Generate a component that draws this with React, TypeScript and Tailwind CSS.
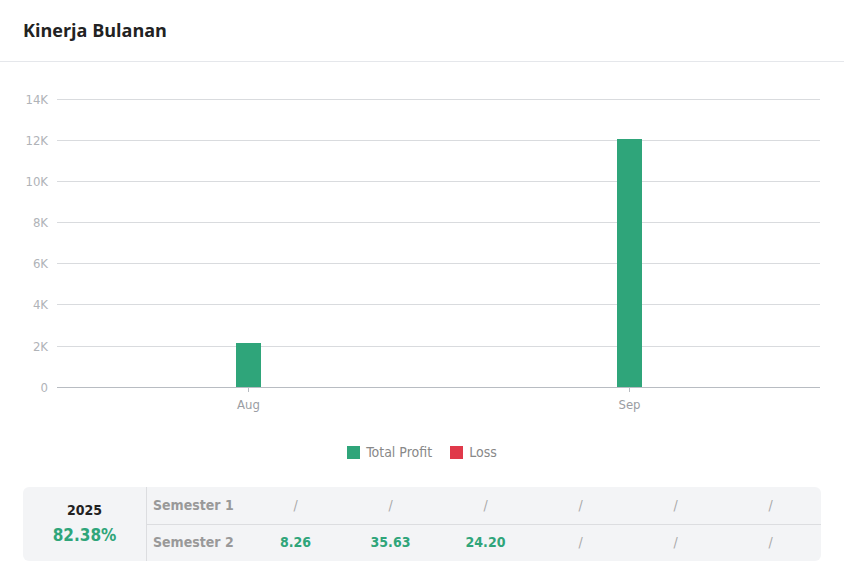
export default function App() {
  const ys = [387, 346, 304, 263, 222, 181, 140, 99];
  const labels = ["0", "2K", "4K", "6K", "8K", "10K", "12K", "14K"];
  const off = 62;
  const s1 = ["/", "/", "/", "/", "/", "/"];
  const s2 = ["8.26", "35.63", "24.20", "/", "/", "/"];
  return (
    <div className="w-[844px] h-[585px] bg-white" style={{ fontFamily: "'Open Sans', 'Noto Sans', sans-serif" }}>
      <div className="h-[62px] border-b border-[#e5e7eb] flex items-center px-[23px]">
        <h1 className="text-[18px] font-bold text-[#222]">Kinerja Bulanan</h1>
      </div>
      <svg width="844" height="360" className="block" style={{ fontFamily: "'DejaVu Sans Condensed', 'Liberation Sans', sans-serif" }}>
        {ys.map((y, i) => (
          <g key={i}>
            <line x1="57" x2="820" y1={y - off + 0.5} y2={y - off + 0.5} stroke={i === 0 ? "#b8bcc2" : "#d9dbde"} strokeWidth="1" />
            <text x="48" y={y - off + 5} textAnchor="end" fontSize="13" fill="#b0b3b8">{labels[i]}</text>
          </g>
        ))}
        <rect x="236" y={343 - off} width="25" height={387 - 343} fill="#2fa57a" />
        <rect x="617" y={139 - off} width="25" height={387 - 139} fill="#2fa57a" />
        <line x1="248.5" x2="248.5" y1={387 - off} y2={392 - off} stroke="#b8bcc2" />
        <line x1="629.5" x2="629.5" y1={387 - off} y2={392 - off} stroke="#b8bcc2" />
        <text x="248.5" y={409 - off} textAnchor="middle" fontSize="13" fill="#9a9da3">Aug</text>
        <text x="629.5" y={409 - off} textAnchor="middle" fontSize="13" fill="#9a9da3">Sep</text>
      </svg>
      <div className="flex justify-center items-center gap-[24px] mt-[20px] text-[14px] text-[#888]" style={{ fontFamily: "'DejaVu Sans Condensed', 'Liberation Sans', sans-serif" }}>
        <div className="flex items-center gap-[6px]"><span className="w-[13px] h-[13px] bg-[#2fa57a]" />Total Profit</div>
        <div className="flex items-center gap-[6px] -ml-[6px]"><span className="w-[13px] h-[13px] bg-[#e0394a]" />Loss</div>
      </div>
      <div className="mx-[23px] mt-[24px] h-[74px] rounded-[6px] bg-[#f3f4f6] flex" style={{ fontFamily: "'DejaVu Sans Condensed', 'Liberation Sans', sans-serif" }}>
        <div className="w-[124px] border-r border-[#dcdde0] flex flex-col items-center justify-center">
          <div className="text-[14px] font-bold text-[#222]">2025</div>
          <div className="text-[17px] font-bold text-[#2fa57a] mt-[2px]">82.38%</div>
        </div>
        <div className="flex-1 flex flex-col">
          {[["Semester 1", s1], ["Semester 2", s2]].map(([name, vals], r) => (
            <div key={r} className={`flex-1 grid grid-cols-[101px_repeat(6,95px)] items-center text-[14px] font-bold ${r === 0 ? "border-b border-[#dcdde0]" : ""}`}>
              <div className="pl-[6px] text-[#999]">{name as string}</div>
              {(vals as string[]).map((v, i) => (
                <div key={i} className={`text-center ${v === "/" ? "text-[#aaa] font-normal" : "text-[#2fa57a]"}`}>{v}</div>
              ))}
            </div>
          ))}
        </div>
      </div>
    </div>
  );
}
